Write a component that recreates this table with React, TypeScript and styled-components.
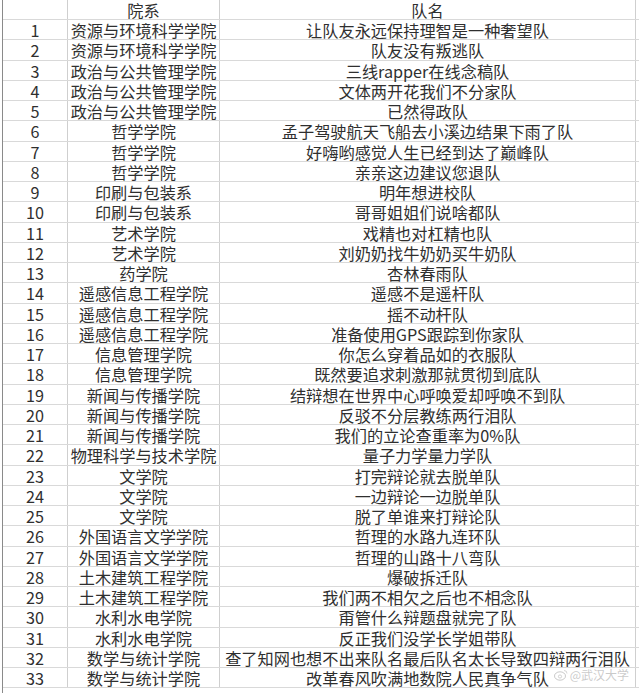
import React from "react";
import styled, { createGlobalStyle } from "styled-components";

const GlobalStyle = createGlobalStyle`
    html, body {
        margin: 0;
        padding: 0;
        background: #ffffff;
    }
    body {
        font-family: "Noto Sans CJK SC", "Noto Sans", sans-serif;
        color: #333333;
    }
`;

interface TeamRow {
    dept: string;
    name: string;
}

const rows: TeamRow[] = [
    { dept: "资源与环境科学学院", name: "让队友永远保持理智是一种奢望队" },
    { dept: "资源与环境科学学院", name: "队友没有叛逃队" },
    { dept: "政治与公共管理学院", name: "三线rapper在线念稿队" },
    { dept: "政治与公共管理学院", name: "文体两开花我们不分家队" },
    { dept: "政治与公共管理学院", name: "已然得政队" },
    { dept: "哲学学院", name: "孟子驾驶航天飞船去小溪边结果下雨了队" },
    { dept: "哲学学院", name: "好嗨哟感觉人生已经到达了巅峰队" },
    { dept: "哲学学院", name: "亲亲这边建议您退队" },
    { dept: "印刷与包装系", name: "明年想进校队" },
    { dept: "印刷与包装系", name: "哥哥姐姐们说啥都队" },
    { dept: "艺术学院", name: "戏精也对杠精也队" },
    { dept: "艺术学院", name: "刘奶奶找牛奶奶买牛奶队" },
    { dept: "药学院", name: "杏林春雨队" },
    { dept: "遥感信息工程学院", name: "遥感不是遥杆队" },
    { dept: "遥感信息工程学院", name: "摇不动杆队" },
    { dept: "遥感信息工程学院", name: "准备使用GPS跟踪到你家队" },
    { dept: "信息管理学院", name: "你怎么穿着品如的衣服队" },
    { dept: "信息管理学院", name: "既然要追求刺激那就贯彻到底队" },
    { dept: "新闻与传播学院", name: "结辩想在世界中心呼唤爱却呼唤不到队" },
    { dept: "新闻与传播学院", name: "反驳不分层教练两行泪队" },
    { dept: "新闻与传播学院", name: "我们的立论查重率为0%队" },
    { dept: "物理科学与技术学院", name: "量子力学量力学队" },
    { dept: "文学院", name: "打完辩论就去脱单队" },
    { dept: "文学院", name: "一边辩论一边脱单队" },
    { dept: "文学院", name: "脱了单谁来打辩论队" },
    { dept: "外国语言文学学院", name: "哲理的水路九连环队" },
    { dept: "外国语言文学学院", name: "哲理的山路十八弯队" },
    { dept: "土木建筑工程学院", name: "爆破拆迁队" },
    { dept: "土木建筑工程学院", name: "我们两不相欠之后也不相念队" },
    { dept: "水利水电学院", name: "甭管什么辩题盘就完了队" },
    { dept: "水利水电学院", name: "反正我们没学长学姐带队" },
    { dept: "数学与统计学院", name: "查了知网也想不出来队名最后队名太长导致四辩两行泪队" },
    { dept: "数学与统计学院", name: "改革春风吹满地数院人民真争气队" },
];

const Sheet = styled.div`
    position: relative;
    width: 636px;
    height: 693px;
    margin-left: 2px;
    border-left: 1px solid #8a8a8a;
    overflow: hidden;
`;

const Row = styled.div<{ $header?: boolean }>`
    display: grid;
    grid-template-columns: 65px 152px 416px;
    height: ${(p) => (p.$header ? "20px" : "20.25px")};
    box-sizing: border-box;
    border-bottom: 1px solid #d9d9d9;
`;

const Cell = styled.div`
    display: flex;
    align-items: center;
    justify-content: center;
    border-right: 1px solid #cfcfcf;
    padding-top: 1px;
    min-width: 0;
`;

const Text = styled.span`
    display: block;
    height: 16px;
    font-size: 16.2px;
    line-height: 16px;
    white-space: nowrap;
    color: #2f2f2f;
`;

const Watermark = styled.div`
    position: absolute;
    right: 10px;
    bottom: 12px;
    display: flex;
    align-items: center;
    gap: 2px;
    height: 13px;
    font-size: 12px;
    line-height: 13px;
    color: rgba(150, 150, 150, 0.5);
    pointer-events: none;
`;

const App: React.FC = () => {
    return (
        <>
            <GlobalStyle />
            <Sheet>
                <Row $header>
                    <Cell />
                    <Cell>
                        <Text>院系</Text>
                    </Cell>
                    <Cell>
                        <Text>队名</Text>
                    </Cell>
                </Row>
                {rows.map((r, i) => (
                    <Row key={i}>
                        <Cell>
                            <Text>{i + 1}</Text>
                        </Cell>
                        <Cell>
                            <Text>{r.dept}</Text>
                        </Cell>
                        <Cell>
                            <Text>{r.name}</Text>
                        </Cell>
                    </Row>
                ))}
                <Watermark>
                    <svg width="14" height="12" viewBox="0 0 14 12">
                        <ellipse cx="6" cy="7" rx="5.5" ry="4.2" fill="none" stroke="currentColor" strokeWidth="1" />
                        <circle cx="6" cy="7.5" r="1.6" fill="none" stroke="currentColor" strokeWidth="0.8" />
                        <path d="M10 1.5 a3 3 0 0 1 3 3" fill="none" stroke="currentColor" strokeWidth="0.8" />
                    </svg>
                    <span>@武汉大学</span>
                </Watermark>
            </Sheet>
        </>
    );
};

export default App;
